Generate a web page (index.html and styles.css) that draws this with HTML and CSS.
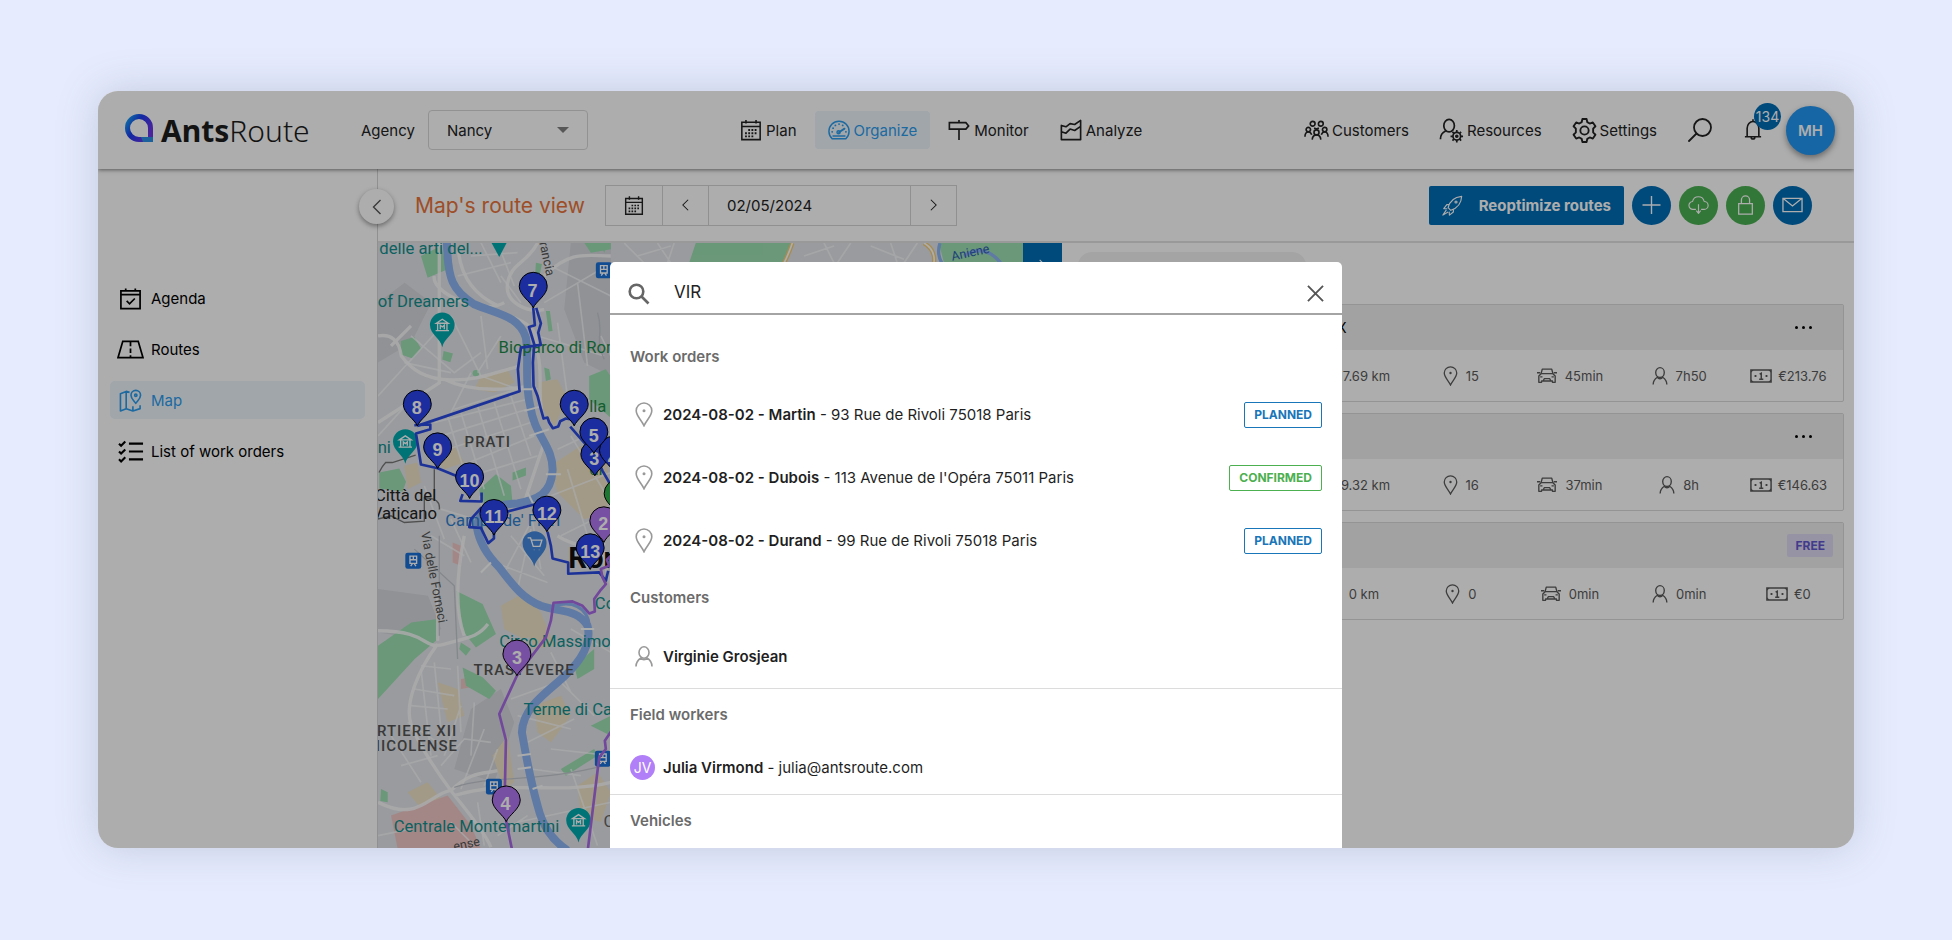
FILE: index.html
```html
<!DOCTYPE html>
<html lang="en">
<head>
<meta charset="utf-8">
<title>AntsRoute - Map's route view</title>
<link rel="stylesheet" href="styles.css">
</head>
<body>
<svg class="sprite" aria-hidden="true">
  <symbol id="i-calendar" viewBox="0 0 24 24">
    <g fill="none" stroke="currentColor" stroke-width="1.7"><path d="M2 3.5h20v19H2zM2 8.2h20"/><path d="M6.5 1v4M17.5 1v4"/></g>
    <path fill="none" stroke="currentColor" stroke-width="2" stroke-dasharray="2 1.5" d="M9 12h10M5.5 15.500h13.500M5.500 19h10"/>
  </symbol>
  <symbol id="i-gauge" viewBox="0 0 24 24">
    <g fill="none" stroke="currentColor" stroke-width="1.600" stroke-linecap="round" stroke-linejoin="round"><path d="M4.500 21.500A11 11 0 1 1 19.500 21.500zM5.500 18.500h13"/><path d="M12 14.500l6-4" stroke-width="2"/><circle cx="11.500" cy="14.500" r="1.700"/><path d="M4.500 14h.1M5.500 10h.1M8 7h.1M12 5.500h.1M16 7h.1M19.500 14h.1" stroke-width="2"/></g>
  </symbol>
  <symbol id="i-sign" viewBox="0 0 24 24">
    <path fill="none" stroke="currentColor" stroke-width="1.800" d="M12 1v3M1.500 4h18l3 3.500-3 3.500h-18zM12 11v12"/>
  </symbol>
  <symbol id="i-chart" viewBox="0 0 24 24">
    <path fill="none" stroke="currentColor" stroke-width="1.800" stroke-linejoin="round" d="M1.500 22.500V7l5 1.500L11 5l5 1 6.500-4.500v21zM1.500 14l5 1.500L11 11l5 1.500L22.500 8M1.500 22.500h21"/>
  </symbol>
  <symbol id="i-people" viewBox="0 0 26 22">
    <g fill="none" stroke="currentColor" stroke-width="1.700"><circle cx="9" cy="4" r="2.500"/><circle cx="17.500" cy="4" r="2.500"/><circle cx="4.500" cy="10" r="2.300"/><circle cx="21.500" cy="10" r="2.300"/><circle cx="13" cy="13" r="2.600"/><path d="M1 17.500c0-3 1.500-5 3.500-5s3 1.500 3.500 3M18 15.500c.5-1.500 1.500-3 3.500-3s3.500 2 3.500 5M8.500 20.500c.3-3 2-5 4.500-5s4.200 2 4.500 5M10.500 8.500l2.500 1 2.500-1"/></g>
  </symbol>
  <symbol id="i-person-gear" viewBox="0 0 26 26">
    <g fill="none" stroke="currentColor" stroke-width="1.800"><ellipse cx="10.500" cy="8" rx="5.500" ry="6.500"/><path d="M1.500 22c0-4 2-7 5.500-8.500"/><circle cx="18.500" cy="19" r="4"/><circle cx="18.500" cy="19" r="1"/><path d="M18.500 12.500V15M18.500 23v2.500M12 19h2.500M22.500 19H25M14 14.500l1.700 1.700M21.300 21.800l1.700 1.700M14 23.500l1.700-1.700M21.300 16.200l1.700-1.700"/></g>
  </symbol>
  <symbol id="i-gear" viewBox="0 0 24 24">
    <g fill="none" stroke="currentColor" stroke-width="1.800" stroke-linejoin="round"><circle cx="12" cy="12" r="4"/><path d="M10 1h4l.7 3 2.300 1.300L20 4.300l2.500 3.600-2.200 2.300v3.600l2.200 2.300L20 19.700l-3-1-2.300 1.300-.7 3h-4l-.7-3L7 18.700l-3 1-2.500-3.600 2.200-2.300v-3.600L1.500 7.900 4 4.300l3 1L9.300 4z"/></g>
  </symbol>
  <symbol id="i-search" viewBox="0 0 24 24">
    <g fill="none" stroke="currentColor" stroke-width="1.800" stroke-linecap="round"><circle cx="14.500" cy="9.500" r="8.500"/><path d="M8.500 15.500L1 23"/></g>
  </symbol>
  <symbol id="i-bell" viewBox="0 0 20 24">
    <path fill="none" stroke="currentColor" stroke-width="1.800" d="M3.500 19V10a6.500 7.500 0 0 1 13 0v9M1 19.500h18M10 0v3M8 20a2 2 0 1 0 4 0"/>
  </symbol>
  <symbol id="i-agenda" viewBox="0 0 24 24">
    <path fill="none" stroke="currentColor" stroke-width="1.800" d="M2 4h20v18.500H2zM2 8h20M7 1.500V5M17 1.500V5M8 14.500l3 3 5.500-5.500"/>
  </symbol>
  <symbol id="i-road" viewBox="0 0 28 20">
    <g fill="none" stroke="currentColor" stroke-width="1.800"><path d="M6 1.500h16L27 18.500H1z"/><path d="M14 2v16" stroke-dasharray="4.500 2.500"/></g>
  </symbol>
  <symbol id="i-map" viewBox="0 0 24 24">
    <g fill="none" stroke="currentColor" stroke-width="1.700" stroke-linejoin="round"><path d="M11 3.500L7.500 2.500 1.500 5v18l6-2.500 7 2.500 7.500-2.500V17M7.500 2.500v18M14.500 18v5"/><path d="M17.500 15c-2-3-5-5-5-8.500a5 5 0 0 1 10 0c0 3.500-3 5.500-5 8.500z"/><circle cx="17.500" cy="6.500" r="1.200"/></g>
  </symbol>
  <symbol id="i-list" viewBox="0 0 24 22">
    <path fill="none" stroke="currentColor" stroke-width="2" d="M1 3.500l2 2L7 1.500M1 11l2 2 4-4M1 18.500l2 2 4-4M10.500 3.500H24M10.500 11H24M10.500 18.500H24"/>
  </symbol>
  <symbol id="i-left" viewBox="0 0 10 16"><path fill="none" stroke="currentColor" stroke-width="1.400" d="M8.500 1L1.500 8l7 7"/></symbol>
  <symbol id="i-right" viewBox="0 0 10 16"><path fill="none" stroke="currentColor" stroke-width="1.400" d="M1.500 1l7 7-7 7"/></symbol>
  <symbol id="i-rocket" viewBox="0 0 24 24">
    <g fill="none" stroke="currentColor" stroke-width="1.300" stroke-linejoin="round"><path d="M7 14.500C8.500 8 13 2.500 22.500 1.500 22 11 16.500 15.500 10 17.500zM8.500 11H5.500L2 15.500l4 .2M13 16.500v3L8.500 23l-.3-4M5 17l-4 6 6-3.500"/><circle cx="16" cy="8" r="1.200"/></g>
  </symbol>
  <symbol id="i-plus" viewBox="0 0 20 20"><path fill="none" stroke="currentColor" stroke-width="1.400" d="M10 1v18M1 10h18"/></symbol>
  <symbol id="i-cloud" viewBox="0 0 24 22">
    <path fill="none" stroke="currentColor" stroke-width="1.300" stroke-linejoin="round" d="M9 16H6a4.500 4.500 0 0 1-.8-9A6.800 6.800 0 0 1 18.500 7a4.500 4.500 0 0 1 0 9H15M12 10v10M9.500 17.500l2.500 3 2.500-3"/>
  </symbol>
  <symbol id="i-lock" viewBox="0 0 20 22">
    <path fill="none" stroke="currentColor" stroke-width="1.400" d="M2.500 9.500h15v11.500h-15zM5.500 9.500V5.500a4.500 4.500 0 0 1 9 0v4"/>
  </symbol>
  <symbol id="i-mail" viewBox="0 0 22 16"><path fill="none" stroke="currentColor" stroke-width="1.400" d="M1 1h20v14H1zM1 1l10 8 10-8"/></symbol>
  <symbol id="i-place" viewBox="0 0 18 25">
    <path fill="none" stroke="currentColor" stroke-width="1.600" d="M9 23.800C6.500 18 1.200 14 1.200 8.800a7.800 7.800 0 0 1 15.600 0C16.800 14 11.500 18 9 23.800z"/><circle cx="9" cy="8.800" r="1.500" fill="currentColor"/>
  </symbol>
  <symbol id="i-car" viewBox="0 0 22 18">
    <g fill="none" stroke="currentColor" stroke-width="1.500" stroke-linejoin="round"><path d="M2 16.500v-7L4.500 7h13L20 9.500v7h-3V15H5v1.500zM4.500 7l1.300-5h10.400l1.300 5M0 6h3.500M18.500 6H22M7 14.500l1-2h6l1 2M3.500 10.500h2.500M16 10.500h2.500"/></g>
  </symbol>
  <symbol id="i-person" viewBox="0 0 18 21">
    <g fill="none" stroke="currentColor" stroke-width="1.600"><ellipse cx="9" cy="6.500" rx="5" ry="5.700"/><path d="M1 20.500c0-4.500 1.800-6.500 5-8.500a3.500 3.500 0 0 0 6 0c3.200 2 5 4 5 8.500"/></g>
  </symbol>
  <symbol id="i-money" viewBox="0 0 24 15">
    <path fill="none" stroke="currentColor" stroke-width="1.600" d="M1 1h22v13H1zM10.500 5.500L12.300 4.500V11M10 11h4.500"/><path fill="currentColor" d="M5 6.500h2v2H5zM17 6.500h2v2h-2zM1 1h3L1 4zM23 1v3l-3-3zM1 14v-3l3 3zM23 14h-3l3-3z"/>
  </symbol>
</svg>

<main class="app">
  <header class="topbar">
    <a class="logo" href="#">
      <svg class="logo-mark" viewBox="0 0 28 28" aria-hidden="true">
        <defs>
          <linearGradient id="lg" x1="0" y1="0" x2="1" y2="0.600"><stop offset="0" stop-color="#16a5f2"/><stop offset="0.450" stop-color="#1c3cf0"/><stop offset="1" stop-color="#6a35e8"/></linearGradient>
        </defs>
        <path fill="none" stroke="url(#lg)" stroke-width="5" d="M25.500 25.500H14A11.500 11.500 0 1 1 25.500 14z"/>
        <path fill="#12b8e6" opacity="0.700" d="M16 23h12v5H18z"/>
      </svg>
      <span class="logo-text"><b>Ants</b>Route</span>
    </a>
    <label class="agency-label" for="agency">Agency</label>
    <div class="select-wrap">
      <select id="agency" class="agency"><option>Nancy</option></select>
      <svg class="caret" viewBox="0 0 12 6" aria-hidden="true"><path d="M0 0h12L6 6z" fill="#808080"/></svg>
    </div>
    <nav class="mainnav">
      <a class="navlink" href="#"><svg><use href="#i-calendar"/></svg>Plan</a>
      <a class="navlink active" href="#"><svg><use href="#i-gauge"/></svg>Organize</a>
      <a class="navlink" href="#"><svg><use href="#i-sign"/></svg>Monitor</a>
      <a class="navlink" href="#"><svg><use href="#i-chart"/></svg>Analyze</a>
    </nav>
    <nav class="tools">
      <a class="tool" href="#"><svg><use href="#i-people"/></svg>Customers</a>
      <a class="tool" href="#"><svg><use href="#i-person-gear"/></svg>Resources</a>
      <a class="tool" href="#"><svg><use href="#i-gear"/></svg>Settings</a>
      <button class="iconbtn" aria-label="Search"><svg><use href="#i-search"/></svg></button>
      <button class="iconbtn bell" aria-label="Notifications"><svg><use href="#i-bell"/></svg><span class="count">134</span></button>
      <button class="avatar">MH</button>
    </nav>
  </header>

  <div class="body">
    <aside class="sidebar">
      <button class="collapse" aria-label="Collapse menu"><svg><use href="#i-left"/></svg></button>
      <a class="side" href="#"><svg><use href="#i-agenda"/></svg>Agenda</a>
      <a class="side" href="#"><svg><use href="#i-road"/></svg>Routes</a>
      <a class="side active" href="#"><svg><use href="#i-map"/></svg>Map</a>
      <a class="side" href="#"><svg><use href="#i-list"/></svg>List of work orders</a>
    </aside>

    <section class="content">
      <div class="toolbar">
        <h1 class="title">Map's route view</h1>
        <div class="datebar">
          <button class="seg wide" aria-label="Calendar"><svg class="cal"><use href="#i-calendar"/></svg></button>
          <button class="seg" aria-label="Previous day"><svg><use href="#i-left"/></svg></button>
          <input class="date" type="text" value="02/05/2024" aria-label="Date">
          <button class="seg" aria-label="Next day"><svg><use href="#i-right"/></svg></button>
        </div>
        <div class="actions">
          <button class="primary"><svg><use href="#i-rocket"/></svg>Reoptimize routes</button>
          <button class="round" aria-label="Add"><svg><use href="#i-plus"/></svg></button>
          <button class="round green" aria-label="Download"><svg><use href="#i-cloud"/></svg></button>
          <button class="round green" aria-label="Lock"><svg><use href="#i-lock"/></svg></button>
          <button class="round" aria-label="Mail"><svg><use href="#i-mail"/></svg></button>
        </div>
      </div>

      <div class="split">
        <div class="map">
          <svg class="canvas" viewBox="21 21 2052 1818" preserveAspectRatio="xMinYMin slice" role="img" aria-label="Route map of Rome">
            <defs>
              <path id="pin" d="M0 0C-8 -20 -42 -38 -42 -65A42 42 0 1 1 42 -65C42 -38 8 -20 0 0Z"/>
              <g id="poi"><path d="M0 0C-5 -28 -37 -38 -37 -67A37 37 0 1 1 37 -67C37 -38 5 -28 0 0Z"/><path fill="none" stroke="#fff" stroke-width="4" d="M-18 -72L0 -84 18 -72zM-14 -70v18M14 -70v18M-20 -50h40M-6 -54v-12l6 5 6 -5v12"/></g>
              <g id="metro"><rect width="48" height="48" rx="7" fill="#1a6fd8"/><path fill="none" stroke="#fff" stroke-width="4" d="M14 10h20v22H14zM14 21h20M24 10v11M16 40l5-7M32 40l-5-7"/></g>
            </defs>
            <rect x="21" y="21" width="2052" height="1818" fill="#e3e5e9"/>
            <g fill="#d4d7dc">
              <path d="M21 200l80-60 80 60-60 120-100 60zM600 20h120v400l-80-40-60-160zM21 1060l150 20 40 100-60 30-130-20zM300 1420l90-60 40 100-60 180-120-40z"/>
            </g>
            <g fill="#efe4c8">
              <path d="M330 420l80-20 20 40-60 30-60-10zM500 440l60-10 30 60-40 80-40-60zM540 690l90-60 80 40v160l-70 20-80-80zM180 650l70-20 30 50-60 20zM100 690l40-10 10 60-40 20zM390 1110l70-40 50 60 20 50-70 30-60-30zM200 1340l60 20 20 80-50 20zM490 1410l80-30 30 60-60 80-40-30zM110 1670l60-30 40 50-50 40zM365 1560l45-60 20 140-30 20zM620 1650l60-40 40 60-30 90-60-20zM470 1190l60-10 20 50-60 10z"/>
            </g>
            <path fill="#f0c8c8" d="M60 1740l170-60 70 90 30 70H80zM245 920l25 10v60l-25-10zM270 1330l30-5v30l-30 5z"/>
            <g fill="#9ce0b3">
              <path d="M150 60l60-30 20 70-60 25zM90 315l40-12 20 35-25 30-35-12zM218 345l28 8-8 26-24-8zM425 710l40-15v24l-40 15zM525 225l12 0 8 60-12 2zM495 80l18 4-6 30h-14zM520 395l15 5 5 30-15 5zM325 760l50-45 45 35 5 55-60 20-35-25zM25 710l60-12 20 40-10 30-70-10zM655 420l50-20 20 30v120l-70-60zM640 20h80v20l-60 10zM255 1065l80 40 40 90-60 40-40-50zM21 1230l100-70 80-10v60l-70 60-110 120zM275 1295l60 30 40 40-20 25-70-40zM270 1220l30 20-15 20-20-20zM570 1600l100-60 10 20-95 60zM610 1290l60-50v60l-50 30zM660 1470l60-30v60zM30 1660l20 10v30l-22-4zM490 1710l10 0 12 40-10 2z"/>
              <circle cx="315" cy="412" r="10"/>
              <path d="M975 21h290l-25 60H955zM1705 21h255v60h-240zM690 21h20l-10 30z"/>
            </g>
            <g fill="none" stroke="#fbfcfd" stroke-width="5" opacity="0.700">
              <path d="M21 480L240 240M21 600L130 480M100 380l140 30M120 300l130 110 80-60M240 240l90 180 110 40M330 240l20 160M390 300l-70 110M300 410l-60 120M250 520l220-70M190 560l280-70M210 600l260-80M230 640l250-80M270 690l220-90M300 720l200-60M230 540l60 200M270 530l70 230M320 510l80 270M370 500l80 260M420 480l60 180M500 300l200 60M520 200l170-100M560 260l40 300M620 140l30 250M690 300l30 60M520 80l200 100M300 60l140-10M260 120l160-40M330 20l60 120M380 20l50 130M450 200l-60-80M160 750l60 160M210 820l100 30M240 850l60 130M180 900l100 60M600 600l120 200M560 640l150-70M540 780l180-70M570 900l140-70M590 700l60 200M480 830l30 170M420 900l100 120M370 980l160 60M440 1060l40-180M400 1010l80-150"/>
              <path d="M150 1290l90 10M130 1360l120 20M120 1410l110 10M110 1460l90 60M150 1300l30 260M190 1280l20 200M260 1290l10 200M90 1590l110-30M60 1500l90 140M210 1590l70-80 80 10M220 1560l50-150M300 1560l10-160M270 1660l70-180M380 1540l-40 110M420 1390l140-50M440 1440l160 40M470 1520l140-70M560 1330l110 110M540 1540l180 20M480 1600l150 20M600 1180l120 70M540 1250l60 120M440 1760l280-60M600 1600l80 230M240 1760l70 70M320 1700l20 130M380 1800l90-60M21 1800l100-20"/>
              <path d="M760 21l60 60M800 60l100-30M860 21l40 60M910 21l-20 60M1300 60l90-30M1360 21l30 60M1440 21l-40 60M1500 30l100 40M1560 21l20 60M1640 21l-40 60"/>
            </g>
            <g fill="none" stroke="#fbfcfd" stroke-width="10" opacity="0.850">
              <path d="M21 300q60-10 70 60c30 40 70 70 150 72s120-20 200-40M205 21v420L21 560M190 120C180 170 330 240 400 200M230 120c100 120 140 100 210 130s50 60 62 110 0 120 10 160M500 21c-30 60-80 60-90 120s60 90 110 80M520 120c80-80 130-60 200-60M262 40q10 120 120 170M21 1185c160 0 130 60 200 40s100-20 130-60M200 1215v-160M200 1225c-60 80-100 180-80 240s90 160 120 200 100 120 120 170M240 1665c60-60 100-50 140-60M21 1700c120 60 150-20 215-35M250 1680c160-50 300 0 470-40M280 1200c-30-80-20-200 0-300M480 450c-120 20-200 10-260-20M460 800l60-180M330 780l10 80M60 330l60-60M700 920c-20 60 40 120 30 220M560 900c60 40 100 20 160 60"/>
            </g>
            <path fill="none" stroke="#c3c7ce" stroke-width="4" d="M205 900v300M130 940l120 110 10 220M250 1655c120-40 250-10 470-70M680 230c20 60-10 80 20 140"/>
            <g fill="none" stroke="#f5cf7a" stroke-width="13"><path d="M1265 21q-10 30-25 60M1660 21q35 20 30 60"/></g>
            <path fill="none" stroke="#fff" stroke-width="5" d="M1265 21q-10 30-25 60M1660 21q35 20 30 60"/>
            <path fill="none" stroke="#8cb4f4" stroke-width="24" stroke-linejoin="round" d="M228 20C230 130 245 165 310 205C380 235 445 240 465 305C475 370 460 440 478 510C490 600 548 630 545 705C540 775 500 790 440 803C380 805 320 820 318 875C325 920 350 960 385 995C430 1055 460 1090 510 1110C570 1130 620 1120 650 1170C665 1230 620 1290 560 1340C500 1390 455 1430 453 1490C465 1560 480 1640 500 1710C515 1770 540 1810 590 1845"/>
            <path fill="none" stroke="#8cb4f4" stroke-width="10" d="M550 1110C600 1095 650 1110 655 1170M1780 60q60-40 110 20M1708 22q-10 30 5 58"/>
            <path fill="none" stroke="#fbfcfd" stroke-width="6" d="M440 460h60M460 525l45-12M475 600l60-20M525 715h45M470 770l20 40M360 980l-30 30M485 1660l30-10M440 1560l40-5M440 1600l40-5M630 1180h40"/>
            <path fill="none" stroke="#777" stroke-width="4" d="M24 710q10-20 20-30h20l70-22M190 700v90M20 850l40-10 40 20 60-4v-70q50 0 45 35"/>

            <g class="lbl" font-size="50">
              <g fill="#12908e"><text x="25" y="55">delle arti del...</text><text x="20" y="213">of Dreamers</text><text x="20" y="650">ni</text><text x="385" y="1235">Circo Massimo</text><text x="672" y="1119">Colosseo</text><text x="458" y="1438">Terme di Caracalla</text><text x="68" y="1788">Centrale Montemartini</text></g>
              <g fill="#1f8a48"><text x="383" y="350">Bioparco di Roma</text><text x="655" y="528">lla</text><text x="655" y="718">di</text></g>
              <g fill="#2f7fd0"><text x="223" y="870">Campo de' Fiori</text></g>
              <g fill="#222"><text x="12" y="797">Città del</text><text x="2" y="850">Vaticano</text></g>
              <g fill="#555" font-weight="500" font-size="45"><text class="area" x="281" y="633">PRATI</text><text class="area" x="308" y="1317">TRASTEVERE</text><text class="area" x="259" y="1502" text-anchor="end">QUARTIERE XII</text><text class="area" x="261" y="1545" text-anchor="end">GIANICOLENSE</text></g>
              <g fill="#555" font-size="38"><text transform="translate(150 890) rotate(79)">Via delle Fornaci</text><text transform="translate(501 0) rotate(78)">Francia</text><text transform="translate(250 1846) rotate(-12)">ense</text></g>
              <text x="698" y="1774" fill="#666">C</text>
              <text x="592" y="997" fill="#111" font-weight="700" font-size="88">Roma</text>
              <text transform="translate(1745 74) rotate(-12)" fill="#2f5fb0" font-size="38">Aniene</text>
            </g>

            <g fill="#00aab0"><use href="#poi" x="214" y="334"/><use href="#poi" x="103" y="684"/><use href="#poi" x="623" y="1821"/><path d="M362 21h45l-22 42z"/></g>
            <path fill="#4388dd" d="M490 992C485 964 455 952 455 922A36 36 0 1 1 527 922C527 952 496 964 490 992Z"/>
            <path fill="none" stroke="#fff" stroke-width="4" d="M470 906h9l8 26h20l6-19h-31M489 942h1M504 942h1"/>
            <use href="#metro" x="675" y="79"/><use href="#metro" x="103" y="951"/><use href="#metro" x="672" y="1545"/><use href="#metro" x="345" y="1629"/>

            <g fill="none" stroke="#2b4be0" stroke-width="8" stroke-linejoin="round">
              <path d="M139 570L446 466 441 400 450 335 510 327 502 290 510 262 496 216M487 216L492 268 474 273 490 325 486 380 488 450 500 480 510 520 518 548 530 545 535 560 546 577 562 572 568 556 585 548 610 552"/>
              <path d="M130 568L178 566V580L135 593 150 686 200 697 255 720 296 750M275 775L268 795 332 797V770M332 815L300 850 295 874 330 876 352 922 369 908V890M369 838L490 806 528 810M530 888L540 930 545 968 592 980V1014L685 1010 705 1035 712 1005M598 572L640 620 670 650 695 705 722 752"/>
            </g>
            <g fill="none" stroke="#a86ae6" stroke-width="8" stroke-linejoin="round">
              <path d="M725 955L708 972 715 990 690 1000 695 1025 705 1045 690 1062 670 1090 672 1127 655 1133 635 1110 605 1097 548 1101 540 1155 525 1205 438 1320 385 1435 405 1513 402 1655 406 1758 425 1850M722 1485L702 1515 705 1540 685 1565 650 1850"/>
            </g>
            <g stroke="#000" stroke-width="3" fill="#2a45ea">
              <use href="#pin" x="672" y="720"/><use href="#pin" x="728" y="708"/>
              <use href="#pin" x="742" y="838" fill="#2fae4a"/>
            </g>
            <g class="num" fill="#fff" font-size="54" text-anchor="middle"><text x="670" y="686">3</text><text x="726" y="686">4</text></g>
            <g stroke="#000" stroke-width="3" fill="#2a45ea">
              <use href="#pin" x="487" y="216"/><use href="#pin" x="139" y="570"/><use href="#pin" x="200" y="698"/><use href="#pin" x="296" y="788"/><use href="#pin" x="369" y="898"/><use href="#pin" x="528" y="888"/><use href="#pin" x="610" y="570"/><use href="#pin" x="669" y="653"/>
              <g fill="#b277f0"><use href="#pin" x="699" y="920"/><use href="#pin" x="438" y="1320"/><use href="#pin" x="406" y="1758"/></g>
              <use href="#pin" x="658" y="1001"/>
            </g>
            <g class="num" fill="#fff" font-size="54" text-anchor="middle">
              <text x="485" y="182">7</text><text x="137" y="533">8</text><text x="200" y="661">9</text><text x="296" y="753">10</text><text x="369" y="863">11</text><text x="528" y="853">12</text><text x="610" y="533">6</text><text x="669" y="618">5</text><text x="697" y="883">2</text><text x="658" y="967">13</text><text x="438" y="1285">3</text><text x="404" y="1724">4</text>
            </g>
          </svg>
          <button class="mapbtn" aria-label="Expand panel"><svg><use href="#i-right"/></svg></button>
        </div>

        <div class="panel">
          <div class="chip"></div>
          <article class="card">
            <div class="card-head"><span class="name">X</span><button class="more" aria-label="More"><i></i><i></i><i></i></button></div>
            <div class="stats"><span class="stat c3">17.69 km</span><span class="stat c4"><svg class="s-place"><use href="#i-place"/></svg>15</span><span class="stat"><svg class="s-car"><use href="#i-car"/></svg>45min</span><span class="stat"><svg class="s-person"><use href="#i-person"/></svg>7h50</span><span class="stat tight"><svg class="s-money"><use href="#i-money"/></svg>€213.76</span></div>
          </article>
          <article class="card">
            <div class="card-head"><button class="more" aria-label="More"><i></i><i></i><i></i></button></div>
            <div class="stats"><span class="stat c3">19.32 km</span><span class="stat c4"><svg class="s-place"><use href="#i-place"/></svg>16</span><span class="stat"><svg class="s-car"><use href="#i-car"/></svg>37min</span><span class="stat"><svg class="s-person"><use href="#i-person"/></svg>8h</span><span class="stat tight"><svg class="s-money"><use href="#i-money"/></svg>€146.63</span></div>
          </article>
          <article class="card">
            <div class="card-head"><span class="free">FREE</span></div>
            <div class="stats"><span class="stat c3 short">0 km</span><span class="stat c4"><svg class="s-place"><use href="#i-place"/></svg>0</span><span class="stat"><svg class="s-car"><use href="#i-car"/></svg>0min</span><span class="stat"><svg class="s-person"><use href="#i-person"/></svg>0min</span><span class="stat tight"><svg class="s-money"><use href="#i-money"/></svg>€0</span></div>
          </article>
        </div>
      </div>
    </section>
  </div>

  <div class="overlay">
    <div class="modal" role="dialog" aria-label="Search">
      <div class="searchrow">
        <svg class="mag" viewBox="0 0 22 22" aria-hidden="true"><g fill="none" stroke="#666" stroke-width="2.600"><circle cx="8.500" cy="8.500" r="6.800"/><path d="M13.500 13.500l7 7"/></g></svg>
        <input class="query" type="text" value="VIR" aria-label="Search term">
        <button class="close" aria-label="Close"><svg viewBox="0 0 18 18"><path fill="none" stroke="#555" stroke-width="2" d="M1 1l16 16M17 1L1 17"/></svg></button>
      </div>
      <section class="group first">
        <h2>Work orders</h2>
        <a class="row order" href="#"><svg class="r-place"><use href="#i-place"/></svg><span class="txt"><b>2024-08-02 - Martin</b> - 93 Rue de Rivoli 75018 Paris</span><span class="tag">PLANNED</span></a>
        <a class="row order" href="#"><svg class="r-place"><use href="#i-place"/></svg><span class="txt"><b>2024-08-02 - Dubois</b> - 113 Avenue de l'Opéra 75011 Paris</span><span class="tag ok">CONFIRMED</span></a>
        <a class="row order" href="#"><svg class="r-place"><use href="#i-place"/></svg><span class="txt"><b>2024-08-02 - Durand</b> - 99 Rue de Rivoli 75018 Paris</span><span class="tag">PLANNED</span></a>
      </section>
      <section class="group">
        <h2>Customers</h2>
        <a class="row customer" href="#"><svg class="r-person"><use href="#i-person"/></svg><span class="txt"><b>Virginie Grosjean</b></span></a>
      </section>
      <section class="group ruled">
        <h2>Field workers</h2>
        <a class="row worker" href="#"><span class="initials">JV</span><span class="txt"><b>Julia Virmond</b> - julia@antsroute.com</span></a>
      </section>
      <section class="group ruled">
        <h2>Vehicles</h2>
      </section>
    </div>
  </div>
</main>
</body>
</html>
```

FILE: styles.css
```css
* { box-sizing: border-box; }

body {
  margin: 0;
  height: 100vh;
  padding: 91px 98px 92px;
  background: #e6ecfd;
  font-family: Inter, "Open Sans", sans-serif;
  font-size: 15px;
  color: #222;
}

button, input, select { font: inherit; color: inherit; }
button { border: 0; padding: 0; background: none; display: flex; align-items: center; justify-content: center; }
a { color: inherit; text-decoration: none; }
.sprite { position: absolute; width: 0; height: 0; }

.app {
  position: relative;
  display: flex;
  flex-direction: column;
  height: 100%;
  overflow: hidden;
  border-radius: 20px;
  background: #fff;
  box-shadow: 0 0 40px rgba(90, 95, 140, .25);
}

/* Top bar */
.topbar {
  z-index: 1;
  display: flex;
  align-items: center;
  height: 78px;
  flex: none;
  padding: 0 19px 0 27px;
  background: #fff;
  box-shadow: 0 1px 4px rgba(0, 0, 0, .5);
}
.logo { display: flex; align-items: center; gap: 8px; width: 236px; color: #1c1c1c; }
.logo-mark { width: 28px; height: 28px; margin-bottom: 4px; }
.logo-text { padding-top: 2px; font-family: "Noto Sans", sans-serif; font-weight: 300; font-size: 30px; line-height: 40px; }
.logo-text b { font-weight: 700; }
.agency-label { width: 67px; }
.select-wrap { position: relative; width: 160px; }
.agency {
  appearance: none;
  width: 100%;
  height: 40px;
  padding: 0 18px;
  border: 1px solid #d8d8d8;
  border-radius: 4px;
  background: #fff;
}
.caret { position: absolute; right: 19px; top: 17px; width: 12px; height: 6px; pointer-events: none; }
.mainnav { display: flex; align-items: center; gap: 5px; margin-left: 139px; }
.navlink { display: flex; align-items: center; gap: 4px; height: 38px; padding: 0 13px; border-radius: 4px; }
.navlink svg { width: 22px; height: 22px; }
.navlink.active { background: #edf5fc; color: #2c9cec; }
.tools { display: flex; align-items: center; margin-left: auto; }
.tool { display: flex; align-items: center; gap: 3px; margin-right: 30px; }
.tool svg { width: 25px; height: 25px; }
.iconbtn { position: relative; width: 24px; height: 24px; margin: 0 32px 0 1px; }
.iconbtn svg { width: 24px; height: 24px; }
.bell { width: 18px; margin: 0 24px 0 0; }
.bell svg { width: 20px; }
.count {
  position: absolute;
  left: 10px;
  top: -15px;
  width: 27px;
  height: 27px;
  border-radius: 50%;
  background: #006db6;
  color: #fff;
  line-height: 27px;
  font-size: 14px;
  text-align: center;
}
.avatar { width: 49px; height: 49px; border-radius: 50%; background: #2196f3; color: #fff; font-weight: 600; box-shadow: 0 3px 6px rgba(0, 0, 0, .4); }

.body { display: flex; flex: 1; min-height: 0; }

/* Sidebar */
.sidebar {
  position: relative;
  display: flex;
  flex-direction: column;
  gap: 13px;
  width: 280px;
  flex: none;
  padding: 110px 12px 0;
  border-right: 1px solid #d4d4d4;
  color: #000;
}
.side { display: flex; align-items: center; gap: 7px; height: 38px; padding: 0 7px; border-radius: 5px; }
.side svg { width: 27px; height: 23px; }
.side.active { background: #edf5fc; color: #2c9cec; }
.collapse {
  position: absolute;
  z-index: 1;
  right: -17px;
  top: 20px;
  width: 35px;
  height: 35px;
  border-radius: 50%;
  background: #fff;
  color: #555;
  box-shadow: 0 2px 5px rgba(0, 0, 0, .4);
}
.collapse svg { width: 10px; height: 16px; }

/* Content toolbar */
.content { display: flex; flex-direction: column; flex: 1; min-width: 0; }
.toolbar {
  display: flex;
  align-items: center;
  flex: none;
  height: 74px;
  padding: 0 42px 0 37px;
  border-bottom: 2px solid #e2e2e2;
}
.title { width: 190px; margin: 0; font-size: 21px; font-weight: 400; color: #e8743b; white-space: nowrap; }
.datebar { display: flex; height: 41px; border: 1px solid #d4d4d4; }
.seg { width: 45px; }
.seg.wide { width: 57px; border-right: 1px solid #d4d4d4; }
.seg svg { width: 9px; height: 12px; }
.seg .cal { width: 20px; height: 21px; }
.date { width: 203px; padding: 0 18px; border: 1px solid #d4d4d4; border-width: 0 1px; background: #fff; }
.actions { display: flex; align-items: center; gap: 8px; margin-left: auto; }
.primary {
  gap: 16px;
  height: 39px;
  padding: 0 13px;
  border-radius: 2px;
  background: #006db6;
  color: #fff;
  font-weight: 700;
}
.primary svg { width: 21px; height: 21px; }
.round { width: 39px; height: 39px; border-radius: 50%; background: #006db6; color: #fff; }
.round svg { width: 21px; height: 20px; }
.green { background: #4bb052; }

/* Map and route panel */
.split { display: grid; grid-template-columns: 684fr 793fr; grid-template-rows: 100%; flex: 1; min-height: 0; }
.map { position: relative; min-width: 0; overflow: hidden; }
.canvas { display: block; width: 100%; height: 100%; }
.lbl { font-family: Roboto, sans-serif; }
.area { letter-spacing: 3px; }
.num { font-family: "Liberation Sans", sans-serif; font-weight: 700; }
.mapbtn { position: absolute; right: 0; top: 0; width: 39px; height: 45px; background: #006db6; color: #fff; }
.mapbtn svg { width: 9px; height: 13px; }
.panel { min-width: 0; padding: 9px 10px 0 16px; }
.chip { width: 228px; height: 42px; margin-bottom: 10px; border-radius: 14px; background: #f2f2f2; }
.card { margin-bottom: 11px; border: 1px solid #dadada; border-radius: 2px; }
.card-head { display: grid; grid-template-columns: repeat(7, 1fr); align-items: center; height: 45px; background: #efefef; color: #000; }
.name { grid-column: 3; padding-left: 40px; font-size: 14px; }
.more { grid-column: 7; gap: 4px; margin-left: 30px; }
.more i { width: 3px; height: 3px; border-radius: 50%; background: #000; }
.free {
  grid-column: 7;
  justify-self: end;
  margin-right: 10px;
  padding: 0 8px;
  border-radius: 2px;
  background: #dedaf2;
  color: #6257cf;
  font-size: 12px;
  font-weight: 700;
  line-height: 23px;
}
.stats { display: grid; grid-template-columns: repeat(7, 1fr); align-items: center; height: 51px; color: #5a5a5a; font-size: 13px; }
.stat { display: flex; align-items: center; justify-content: center; gap: 8px; }
.stat.tight { gap: 6px; }
.c3 { grid-column: 3; justify-content: flex-end; padding-right: 16px; }
.c3.short { padding-right: 27px; }
.c4 { grid-column: 4; }
.s-place { width: 15px; height: 20px; }
.s-car { width: 20px; height: 17px; }
.s-person { width: 16px; height: 18px; }
.s-money { width: 22px; height: 14px; }

/* Search dialog */
.overlay {
  position: absolute;
  z-index: 2;
  inset: 0;
  display: flex;
  justify-content: center;
  padding-top: 171px;
  background: rgba(0, 0, 0, .32);
}
.modal { width: 732px; overflow: hidden; border-radius: 5px 5px 0 0; background: #fff; }
.searchrow { display: flex; align-items: center; height: 53px; padding: 0 18px; border-bottom: 2px solid #a4a4a4; }
.mag { width: 22px; height: 22px; margin-top: 12px; }
.query { flex: 1; height: 40px; margin: 8px 0 0 24px; padding: 0; border: 0; outline: 0; font-size: 17px; line-height: 24px; }
.close { margin-top: 12px; }
.close svg { width: 17px; height: 17px; }
.group { padding: 0 20px; }
.group.first { padding-top: 16px; }
.group.ruled { border-top: 1px solid #dcdcdc; }
.group h2 { margin: 0; font-size: 15px; font-weight: 600; line-height: 52px; color: #6b6b6b; }
.row { display: flex; align-items: center; color: #1f1f1f; }
.row > svg { color: #999; }
.order { height: 63px; }
.customer { height: 64px; }
.worker { height: 53px; }
.r-place { width: 18px; height: 25px; margin: 0 10px 0 5px; }
.r-person { width: 18px; height: 21px; margin: 0 10px 0 5px; }
.txt { flex: 1; }
.txt b { font-weight: 600; }
.initials { width: 25px; height: 25px; margin-right: 8px; border-radius: 50%; background: #b180f8; color: #fff; font-size: 14px; line-height: 25px; text-align: center; }
.tag { padding: 0 9px; border: 1px solid #1976b9; border-radius: 2px; color: #1976b9; font-size: 12px; font-weight: 700; line-height: 24px; }
.tag.ok { border-color: #4caf50; color: #4caf50; }
```
